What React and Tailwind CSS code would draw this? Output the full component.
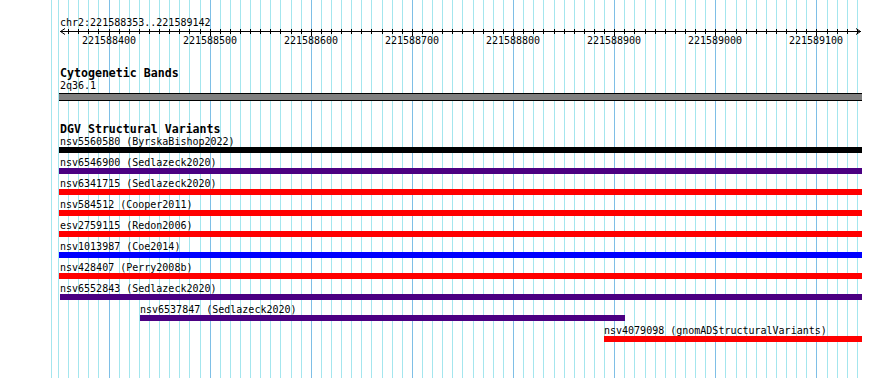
const scale = 1.0114;
const bpX = (bp) => Math.round(108.5 + (bp - 221588400) * scale);

const rows = [
  { name: "nsv5560580 (ByrskaBishop2022)", color: "bg-black", x0: 59, x1: 862 },
  { name: "nsv6546900 (Sedlazeck2020)", color: "bg-[#4b0082]", x0: 59, x1: 862 },
  { name: "nsv6341715 (Sedlazeck2020)", color: "bg-[#ff0000]", x0: 59, x1: 862 },
  { name: "nsv584512 (Cooper2011)", color: "bg-[#ff0000]", x0: 59, x1: 862 },
  { name: "esv2759115 (Redon2006)", color: "bg-[#ff0000]", x0: 59, x1: 862 },
  { name: "nsv1013987 (Coe2014)", color: "bg-[#0000ff]", x0: 59, x1: 862 },
  { name: "nsv428407 (Perry2008b)", color: "bg-[#ff0000]", x0: 59, x1: 862 },
  { name: "nsv6552843 (Sedlazeck2020)", color: "bg-[#4b0082]", x0: 60, x1: 862 },
  { name: "nsv6537847 (Sedlazeck2020)", color: "bg-[#4b0082]", x0: 140, x1: 625 },
  { name: "nsv4079098 (gnomADStructuralVariants)", color: "bg-[#ff0000]", x0: 604, x1: 862 },
];

const ticks = [];
for (let bp = 221588350; bp <= 221589140; bp += 10) ticks.push(bp);

function Grid() {
  return (
    <svg className="absolute inset-0" width="890" height="378">
      <line x1="51.5" y1="0" x2="51.5" y2="378" stroke="#a4e6ee" />
      {ticks.map((bp) => (
        <line
          key={bp}
          x1={bpX(bp) + 0.5}
          y1="0"
          x2={bpX(bp) + 0.5}
          y2="378"
          stroke={bp % 100 === 0 ? "#7ebfe6" : "#a4e6ee"}
        />
      ))}
    </svg>
  );
}

function Ruler() {
  return (
    <svg className="block" width="890" height="20">
      <line x1="60" y1="3.5" x2="861" y2="3.5" stroke="#000" />
      <polyline points="65,0.5 60.5,3.5 65,6.5" fill="none" stroke="#000" />
      <polyline points="856,0.5 860.5,3.5 856,6.5" fill="none" stroke="#000" />
      {ticks
        .filter((bp) => bp >= 221588360)
        .map((bp) => (
          <line
            key={bp}
            x1={bpX(bp) + 0.5}
            y1="1"
            x2={bpX(bp) + 0.5}
            y2={bp % 100 === 0 ? 8 : 6}
            stroke="#000"
          />
        ))}
      {ticks
        .filter((bp) => bp % 100 === 0)
        .map((bp) => (
          <text key={bp} x={bpX(bp)} y="16" fontSize="10" textAnchor="middle" fill="#000">
            {bp}
          </text>
        ))}
    </svg>
  );
}

function VariantRow({ row }) {
  return (
    <div className="h-[21px]">
      <div className="text-[10px] leading-[11px] whitespace-nowrap" style={{ paddingLeft: row.x0 === 59 ? 60 : row.x0 }}>
        {row.name}
      </div>
      <div className={`h-[6px] ${row.color}`} style={{ marginLeft: row.x0, width: row.x1 - row.x0 }} />
    </div>
  );
}

export default function App() {
  return (
    <div className="relative w-[890px] h-[378px] overflow-hidden bg-white text-black font-['DejaVu_Sans_Mono','Liberation_Mono',monospace]">
      <Grid />
      <div className="relative pt-[17px]">
        <div className="pl-[60px] text-[10px] leading-[11px]">chr2:221588353..221589142</div>
        <Ruler />

        <div className="mt-[18px] pl-[60px] text-[11.6px] font-bold leading-[14px]">Cytogenetic Bands</div>
        <div className="pl-[60px] text-[10px] leading-[12px]">2q36.1</div>
        <div className="mt-[1px] ml-[59px] w-[803px] h-[8px] border-y border-black bg-[#808080]" />

        <div className="mt-[21px] pl-[60px] text-[11.6px] font-bold leading-[14px]">DGV Structural Variants</div>
        {rows.map((row) => (
          <VariantRow key={row.name} row={row} />
        ))}
      </div>
    </div>
  );
}
